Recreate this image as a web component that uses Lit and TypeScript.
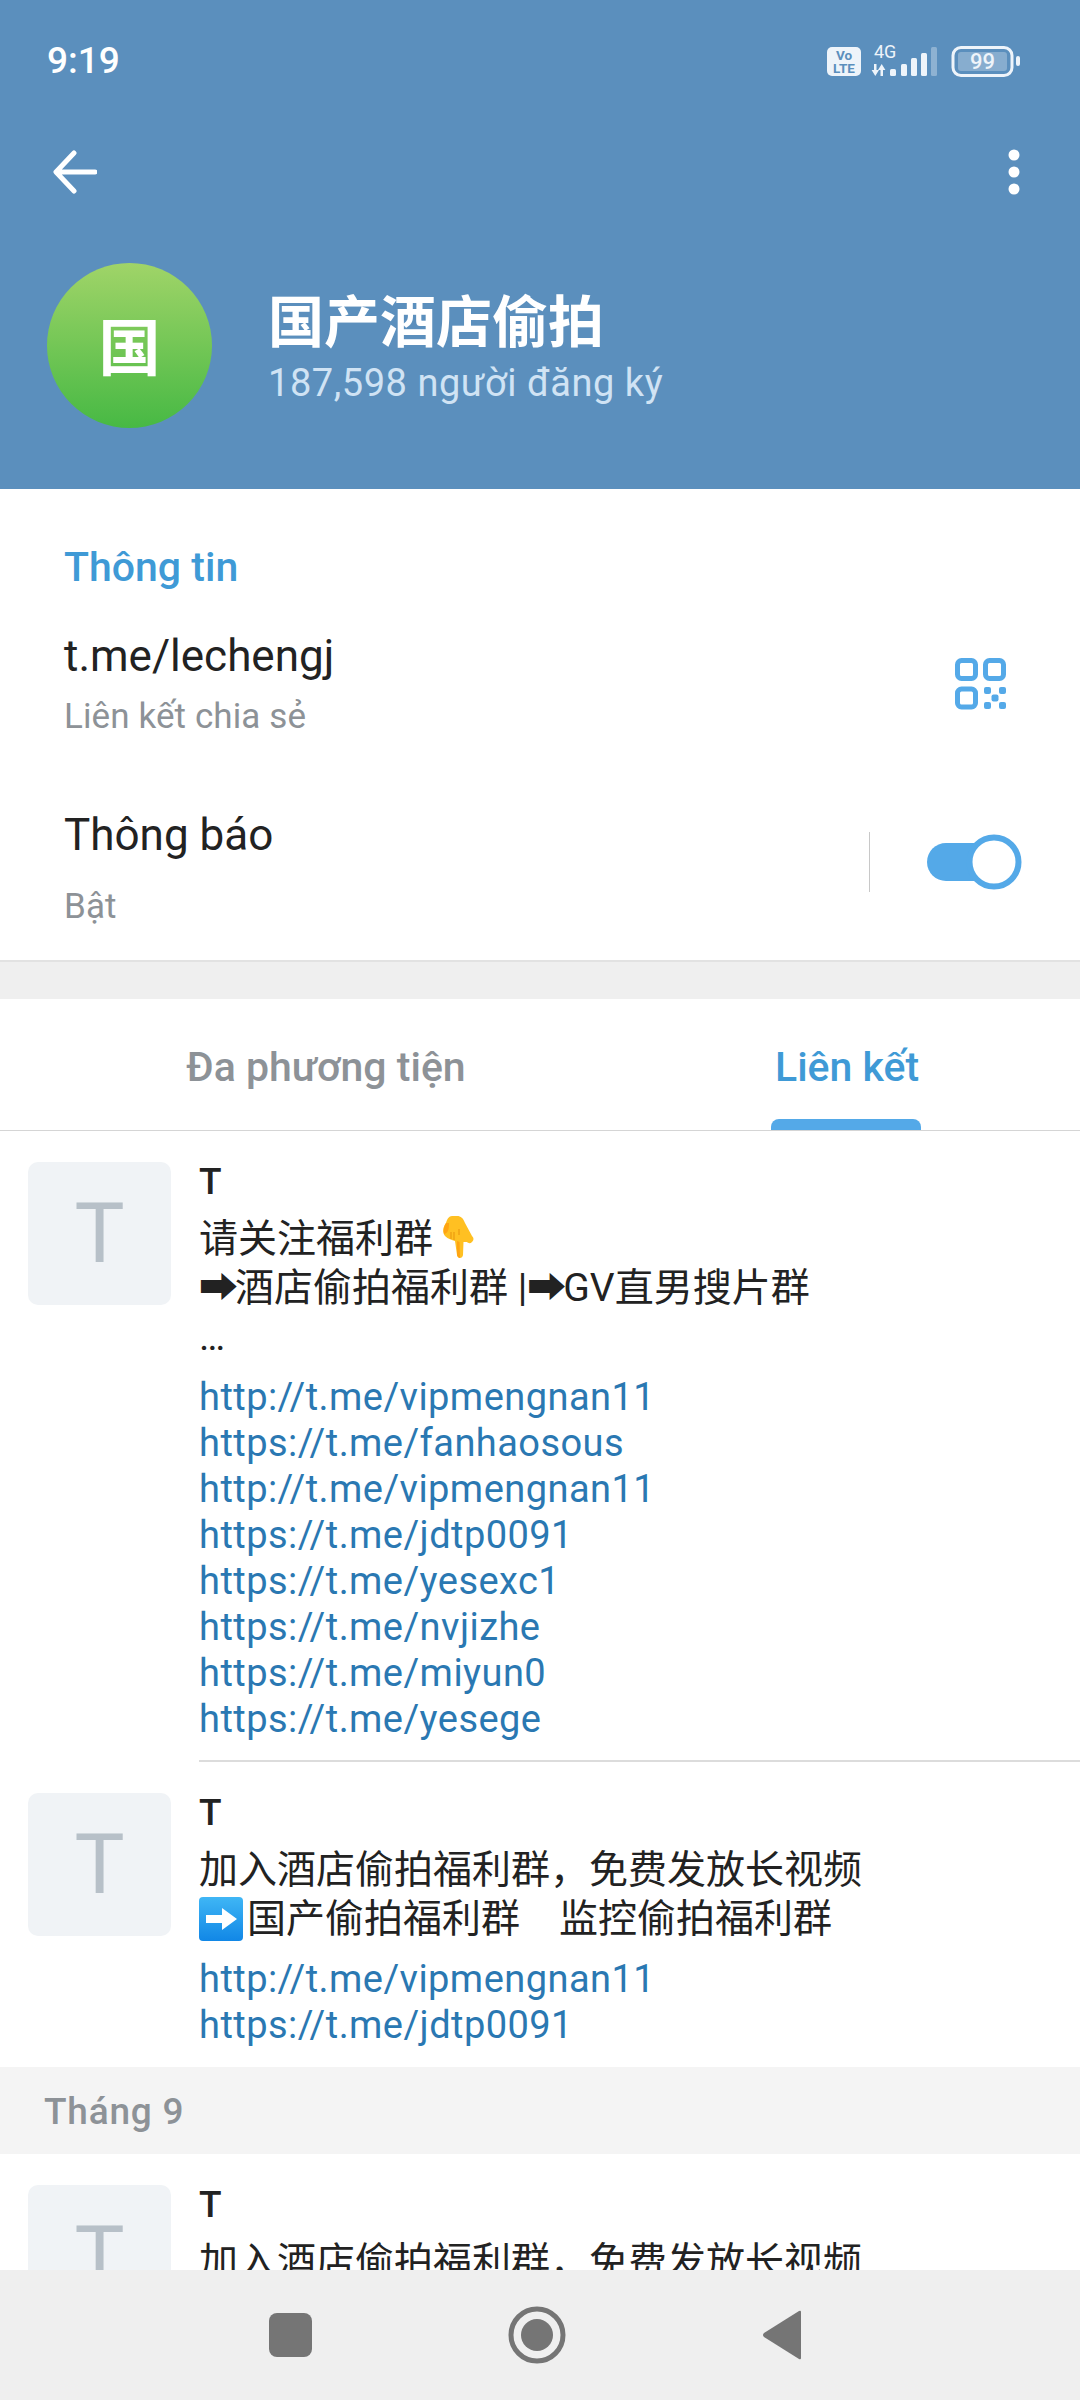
import { LitElement, html, css, svg } from "lit";
import { customElement } from "lit/decorators.js";

const HAND = svg`<svg class="emoji" viewBox="0 0 34 44" width="34" height="44"><path fill="#ffc022" d="M5 8 C2 12 1 17 4 21 C7 24 11 25 14 26 L16 40 C16.500 44 21.500 44 22 40 L22.500 27 L26 27 C27 28 29 29 31 27 C33 25 33 23 31 21 L24 8 C22 3 20 1 16 1 L11 1 C8 1 6 4 5 8 Z"/><path fill="#ffa412" d="M5 8 C3 11 2 15 3 19 C8 18 8 12 8 8 Z M16 26 L16 40 C16.500 42 18 43 19 43 L18.500 27 Z"/><path stroke="#e8930c" stroke-width="1" fill="none" d="M13 17 L13 25 M10 17 L10 24 M18 14 L18 20"/></svg>`;

const ARROW_BOX = svg`<svg class="emoji box" viewBox="0 0 44 44" width="44" height="44"><defs><linearGradient id="bx" x1="0" y1="0" x2="0" y2="1"><stop offset="0" stop-color="#3fb6f5"/><stop offset="1" stop-color="#1187e6"/></linearGradient></defs><rect width="44" height="44" rx="4" fill="url(#bx)"/><path fill="#fff" d="M7 18 H23 V11 L38 22 L23 33 V26 H7 Z"/></svg>`;

@customElement("link-item")
class LinkItem extends LitElement {
  static properties = { links: { type: Array }, last: { type: Boolean } };
  links: string[] = [];
  last = false;
  static styles = css`
    :host { display: block; }
    .row { display: flex; padding: 31px 0 0 28px; gap: 28px; }
    .thumb {
      width: 143px; height: 143px; flex: none; border-radius: 10px; background: #f0f3f6;
      color: #b7c0c8; font: 400 84px/143px Roboto, sans-serif; text-align: center;
    }
    .main { flex: 1; min-width: 0; padding-bottom: 19px; }
    .main.sep { border-bottom: 2px solid #dcdcdc; padding-bottom: 18px; }
    .title { font: 500 37px/38px Roboto, sans-serif; color: #222; margin: 1px 0 14px; }
    .body { color: #222; font: 400 39px/49px Roboto, "Noto Sans CJK SC", sans-serif; }
    .body ::slotted(*) { display: block; }
    .links { margin-top: 12px; font: 400 38px/46px Roboto, sans-serif; color: #2a78b2; letter-spacing: 0.45px; }
    .links div { white-space: nowrap; }
    .empty { display: none; }
  `;
  render() {
    return html`<div class="row">
      <div class="thumb">T</div>
      <div class="main ${this.last ? "" : "sep"}">
        <div class="title">T</div>
        <div class="body"><slot></slot></div>
        <div class="links ${this.links.length ? "" : "empty"}">${this.links.map((l) => html`<div>${l}</div>`)}</div>
      </div>
    </div>`;
  }
}

@customElement("app-root")
class AppRoot extends LitElement {
  static styles = css`
    :host { display: block; width: 1080px; height: 2400px; }
    .page { width: 1080px; height: 2400px; display: flex; flex-direction: column; overflow: hidden; background: #fff; font-family: Roboto, "Noto Sans CJK SC", sans-serif; }

    .head { height: 489px; flex: none; background: #5b8fbd; color: #fff; box-sizing: border-box; padding: 0 47px; display: flex; flex-direction: column; }
    .status { height: 40px; margin-top: 41px; display: flex; justify-content: space-between; align-items: center; }
    .time { font: 500 37px/40px Roboto, sans-serif; }
    .sicons { margin-right: 11px; }
    .sicons text { font-family: Roboto, sans-serif; fill: #eef4fa; }
    .sicons text.dark { fill: #5b8fbd; font-weight: 700; font-size: 13.5px; }
    .tools { margin-top: 66px; height: 50px; display: flex; justify-content: space-between; align-items: center; }
    .back { margin-left: 4px; }
    .dots { margin-right: 13px; }
    .who { margin-top: 66px; display: flex; align-items: center; gap: 56px; }
    .avatar { width: 165px; height: 165px; border-radius: 50%; background: linear-gradient(#a0d468, #47b944); display: flex; align-items: center; justify-content: center; font: 700 62px/1 "Noto Sans CJK SC", sans-serif; flex: none; padding-bottom: 3px; box-sizing: border-box; }
    .name { font: 700 56px/70px "Noto Sans CJK SC", sans-serif; margin-bottom: 5px; }
    .subs { font: 400 38px/50px Roboto, sans-serif; color: #d0e3f4; letter-spacing: 0.55px; }

    .info { height: 473px; flex: none; box-sizing: border-box; padding: 52px 58px 0 64px; border-bottom: 2px solid #e2e2e2; }
    .info h2 { margin: 0; font: 500 41px/52px Roboto, sans-serif; color: #3f9ad6; }
    .line { display: flex; justify-content: space-between; align-items: center; }
    .l1 { margin-top: 38px; }
    .l2 { margin-top: 73px; }
    .big { font: 400 44px/50px Roboto, sans-serif; color: #222; }
    .small { font: 400 35px/40px Roboto, sans-serif; color: #8d9297; margin-top: 16px; letter-spacing: 0.1px; }
    .l2 .small { margin-top: 27px; }
    .switch { display: flex; align-items: center; gap: 56px; padding-bottom: 14px; }
    .vdiv { width: 1px; height: 60px; background: #c8c8c8; }
    .qr { margin-right: 15px; }

    .gap { height: 37px; flex: none; background: #efefef; }

    .tabs { height: 131px; flex: none; display: flex; border-bottom: 1px solid #d5d5d5; }
    .tab { font: 500 41px/1 Roboto, sans-serif; color: #8d9297; display: flex; align-items: center; justify-content: center; padding-top: 6px; box-sizing: border-box; }
    .tab.a { width: 652px; }
    .tab.b { flex: 1; color: #3f9ad6; position: relative; justify-content: flex-start; padding-left: 123px; }
    .tab.b::after { content: ""; position: absolute; left: 119px; bottom: 0; width: 150px; height: 11px; border-radius: 8px 8px 0 0; background: #54a9e8; }

    .list { flex: 1; min-height: 0; overflow: hidden; }
    .emoji { vertical-align: -7px; margin-left: 8px; }
    .box { margin: 0 4px 0 0; vertical-align: -9px; }
    .ar { margin-right: -3px; }
    .month { height: 87px; background: #f4f4f4; padding-left: 44px; font: 500 37px/89px Roboto, sans-serif; color: #8d9297; letter-spacing: 0.8px; }

    .nav { height: 130px; flex: none; background: #efefef; display: flex; align-items: center; justify-content: space-between; padding: 0 278px 0 269px; }
  `;
  render() {
    return html`<div class="page">
      <div class="head">
        <div class="status">
          <span class="time">9:19</span>
          <svg class="sicons" width="195" height="40" viewBox="0 0 195 40">
            <rect x="0" y="6" width="34" height="29" rx="5" fill="#eef4fa"/>
            <text class="dark" x="17" y="19" text-anchor="middle">Vo</text>
            <text class="dark" x="17" y="32" text-anchor="middle">LTE</text>
            <text x="47" y="17" font-size="18">4G</text>
            <path fill="#eef4fa" d="M47 23 h2.500 v6 h2.500 l-3.700 6 l-3.700 -6 h2.400 z M53.500 35 v-6 h-2.500 l3.700 -6 l3.700 6 h-2.400 v6 z"/>
            <rect x="63" y="28" width="6" height="7" rx="1.500" fill="#eef4fa"/>
            <rect x="74" y="23" width="6" height="12" rx="1.500" fill="#eef4fa"/>
            <rect x="84" y="17" width="6" height="18" rx="1.500" fill="#eef4fa"/>
            <rect x="94" y="12" width="6" height="23" rx="1.500" fill="#eef4fa"/>
            <rect x="104" y="6" width="6" height="29" rx="1.500" fill="#eef4fa" opacity=".35"/>
            <rect x="126" y="6.500" width="59" height="28" rx="8" fill="none" stroke="#eef4fa" stroke-width="3"/>
            <rect x="131" y="11" width="49" height="19" rx="3" fill="#eef4fa" opacity=".3"/>
            <text x="155.500" y="28" text-anchor="middle" font-size="22" font-weight="500">99</text>
            <rect x="189" y="15" width="4" height="10" rx="2" fill="#eef4fa"/>
          </svg>
        </div>
        <div class="tools">
          <svg class="back" width="46" height="44" viewBox="0 0 46 44"><path d="M44 22 H6 M23 3 L5 22 L23 41" fill="none" stroke="#fff" stroke-width="5" stroke-linecap="round" stroke-linejoin="round"/></svg>
          <svg class="dots" width="12" height="46" viewBox="0 0 12 46"><circle cx="6" cy="6" r="5.500" fill="#fff"/><circle cx="6" cy="23" r="5.500" fill="#fff"/><circle cx="6" cy="40" r="5.500" fill="#fff"/></svg>
        </div>
        <div class="who">
          <div class="avatar">国</div>
          <div>
            <div class="name">国产酒店偷拍</div>
            <div class="subs">187,598 người đăng ký</div>
          </div>
        </div>
      </div>

      <div class="info">
        <h2>Thông tin</h2>
        <div class="line l1">
          <div>
            <div class="big">t.me/lechengj</div>
            <div class="small">Liên kết chia sẻ</div>
          </div>
          <svg class="qr" width="52" height="52" viewBox="0 0 52 52">
            <g fill="none" stroke="#54a9e8" stroke-width="5">
              <rect x="2.500" y="2.500" width="18" height="18" rx="4"/>
              <rect x="30.500" y="2.500" width="18" height="18" rx="4"/>
              <rect x="2.500" y="31" width="18" height="18" rx="4"/>
            </g>
            <g fill="#54a9e8">
              <rect x="29" y="29" width="7" height="7" rx="2"/>
              <rect x="44" y="29" width="7" height="7" rx="2"/>
              <rect x="36.500" y="36.500" width="7" height="7" rx="2"/>
              <rect x="29" y="44" width="7" height="7" rx="2"/>
              <rect x="44" y="44" width="7" height="7" rx="2"/>
            </g>
          </svg>
        </div>
        <div class="line l2">
          <div>
            <div class="big">Thông báo</div>
            <div class="small">Bật</div>
          </div>
          <div class="switch">
            <div class="vdiv"></div>
            <svg width="96" height="56" viewBox="0 0 96 56"><rect x="1" y="9" width="70" height="38" rx="19" fill="#54a9e8"/><circle cx="68" cy="28" r="24.500" fill="#fff" stroke="#54a9e8" stroke-width="6"/></svg>
          </div>
        </div>
      </div>

      <div class="gap"></div>

      <div class="tabs">
        <div class="tab a">Đa phương tiện</div>
        <div class="tab b">Liên kết</div>
      </div>

      <div class="list">
        <link-item .links=${["http://t.me/vipmengnan11","https://t.me/fanhaosous","http://t.me/vipmengnan11","https://t.me/jdtp0091","https://t.me/yesexc1","https://t.me/nvjizhe","https://t.me/miyun0","https://t.me/yesege"]}>
          <div>请关注福利群${HAND}<br><span class="ar">➡</span>酒店偷拍福利群 |<span class="ar">➡</span>GV直男搜片群<br>…</div>
        </link-item>
        <link-item last .links=${["http://t.me/vipmengnan11","https://t.me/jdtp0091"]}>
          <div>加入酒店偷拍福利群，免费发放长视频<br>${ARROW_BOX}国产偷拍福利群　监控偷拍福利群</div>
        </link-item>
        <div class="month">Tháng 9</div>
        <link-item last .links=${[]}>
          <div>加入酒店偷拍福利群，免费发放长视频</div>
        </link-item>
      </div>

      <div class="nav">
        <svg width="43" height="44" viewBox="0 0 43 44"><rect width="43" height="44" rx="8" fill="#757575"/></svg>
        <svg width="58" height="58" viewBox="0 0 58 58"><circle cx="29" cy="29" r="26" fill="none" stroke="#757575" stroke-width="5"/><circle cx="29" cy="29" r="16" fill="#757575"/></svg>
        <svg width="40" height="50" viewBox="0 0 40 50"><path d="M39 2 V48 Q39 50 37 49 L2 27 Q0 25 2 23 L37 1 Q39 0 39 2 Z" fill="#757575"/></svg>
      </div>
    </div>`;
  }
}
